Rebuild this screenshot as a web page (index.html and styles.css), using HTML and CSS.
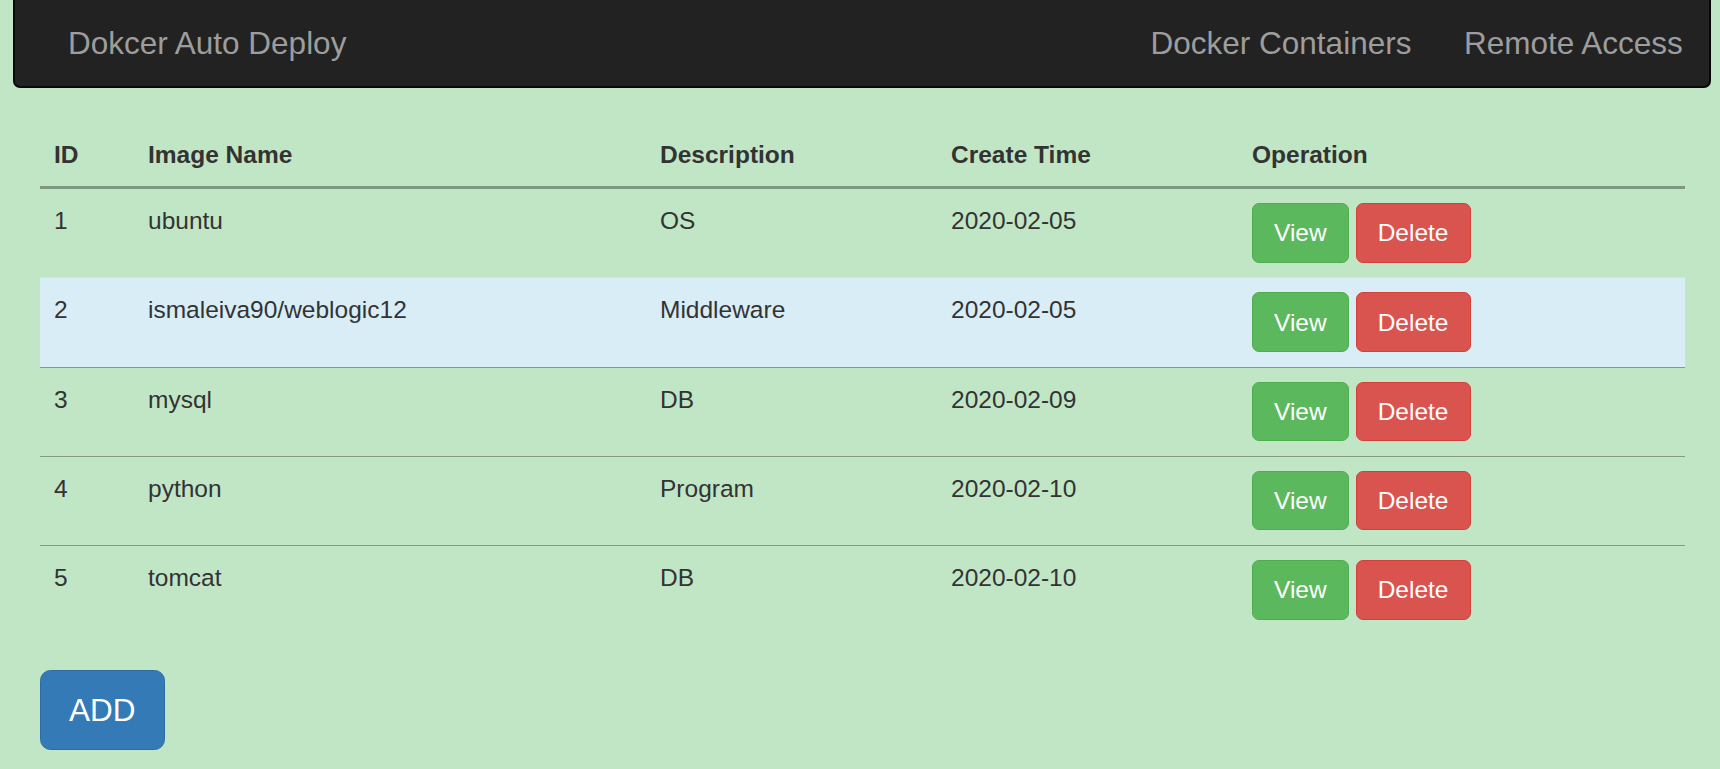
FILE: index.html
```html
<!DOCTYPE html>
<html lang="en">
<head>
<meta charset="utf-8">
<title>Dokcer Auto Deploy</title>
<link rel="stylesheet" href="styles.css">
</head>
<body>
<header class="navbar">
  <a class="brand" href="#">Dokcer Auto Deploy</a>
  <nav class="nav">
    <a class="nav-link" href="#">Docker Containers</a>
    <a class="nav-link" href="#">Remote Access</a>
  </nav>
</header>
<main class="content">
  <table class="table">
    <thead>
      <tr>
        <th class="col-id">ID</th>
        <th class="col-name">Image Name</th>
        <th class="col-desc">Description</th>
        <th class="col-time">Create Time</th>
        <th class="col-op">Operation</th>
      </tr>
    </thead>
    <tbody>
      <tr>
        <td>1</td><td>ubuntu</td><td>OS</td><td>2020-02-05</td>
        <td><div class="ops"><button class="btn btn-view">View</button><button class="btn btn-delete">Delete</button></div></td>
      </tr>
      <tr class="row-info">
        <td>2</td><td>ismaleiva90/weblogic12</td><td>Middleware</td><td>2020-02-05</td>
        <td><div class="ops"><button class="btn btn-view">View</button><button class="btn btn-delete">Delete</button></div></td>
      </tr>
      <tr>
        <td>3</td><td>mysql</td><td>DB</td><td>2020-02-09</td>
        <td><div class="ops"><button class="btn btn-view">View</button><button class="btn btn-delete">Delete</button></div></td>
      </tr>
      <tr>
        <td>4</td><td>python</td><td>Program</td><td>2020-02-10</td>
        <td><div class="ops"><button class="btn btn-view">View</button><button class="btn btn-delete">Delete</button></div></td>
      </tr>
      <tr>
        <td>5</td><td>tomcat</td><td>DB</td><td>2020-02-10</td>
        <td><div class="ops"><button class="btn btn-view">View</button><button class="btn btn-delete">Delete</button></div></td>
      </tr>
    </tbody>
  </table>
  <button class="btn-add">ADD</button>
</main>
</body>
</html>
```
FILE: styles.css
```css
* { box-sizing: border-box; }

html, body {
  margin: 0;
  padding: 0;
}

body {
  background: #c1e6c6;
  font-family: "Liberation Sans", Arial, Helvetica, sans-serif;
  font-size: 24.5px;
  line-height: 35px;
  color: #333333;
}

.navbar {
  margin: 0 9px 0 13px;
  height: 88px;
  background: #222222;
  border: 2px solid #080808;
  border-top: 0;
  border-radius: 0 0 7px 7px;
  display: flex;
  align-items: center;
  justify-content: space-between;
  padding: 0 0 0 53px;
}

.brand {
  color: #9d9d9d;
  font-size: 31.5px;
  line-height: 35px;
  text-decoration: none;
}

.nav {
  display: flex;
}

.nav-link {
  color: #9d9d9d;
  font-size: 31.5px;
  line-height: 35px;
  text-decoration: none;
  padding: 0 26.25px;
}

.content {
  padding: 35px 35px 0 40px;
}

.table {
  width: 100%;
  border-collapse: collapse;
  table-layout: fixed;
  margin-bottom: 35.5px;
}

.table th {
  text-align: left;
  font-weight: bold;
  padding: 14px;
  line-height: 35px;
  border-bottom: 3px solid #7f9680;
  vertical-align: bottom;
}

.col-id { width: 94px; }
.col-name { width: 512px; }
.col-desc { width: 291px; }
.col-time { width: 301px; }

.table td {
  padding: 14px 14px 14.75px;
  line-height: 35px;
  vertical-align: top;
  border-top: 1px solid #849a86;
}

.table tbody tr:first-child td {
  border-top: 0;
}

.row-info td {
  background: #d9edf7;
  border-top-color: #d6e3dd;
}

.ops {
  display: flex;
  gap: 7px;
}

.btn {
  font-family: inherit;
  font-size: 24.5px;
  line-height: 35px;
  padding: 11.25px 21px;
  border: 1px solid transparent;
  border-radius: 7px;
  color: #ffffff;
  cursor: pointer;
}

.btn-view {
  background: #5cb85c;
  border-color: #4cae4c;
}

.btn-delete {
  background: #d9534f;
  border-color: #d43f3a;
}

.btn-add {
  font-family: inherit;
  font-size: 31.5px;
  line-height: 42px;
  padding: 18.25px 28px;
  background: #337ab7;
  border: 1px solid #2e6da4;
  border-radius: 10.5px;
  color: #ffffff;
  cursor: pointer;
}
```
